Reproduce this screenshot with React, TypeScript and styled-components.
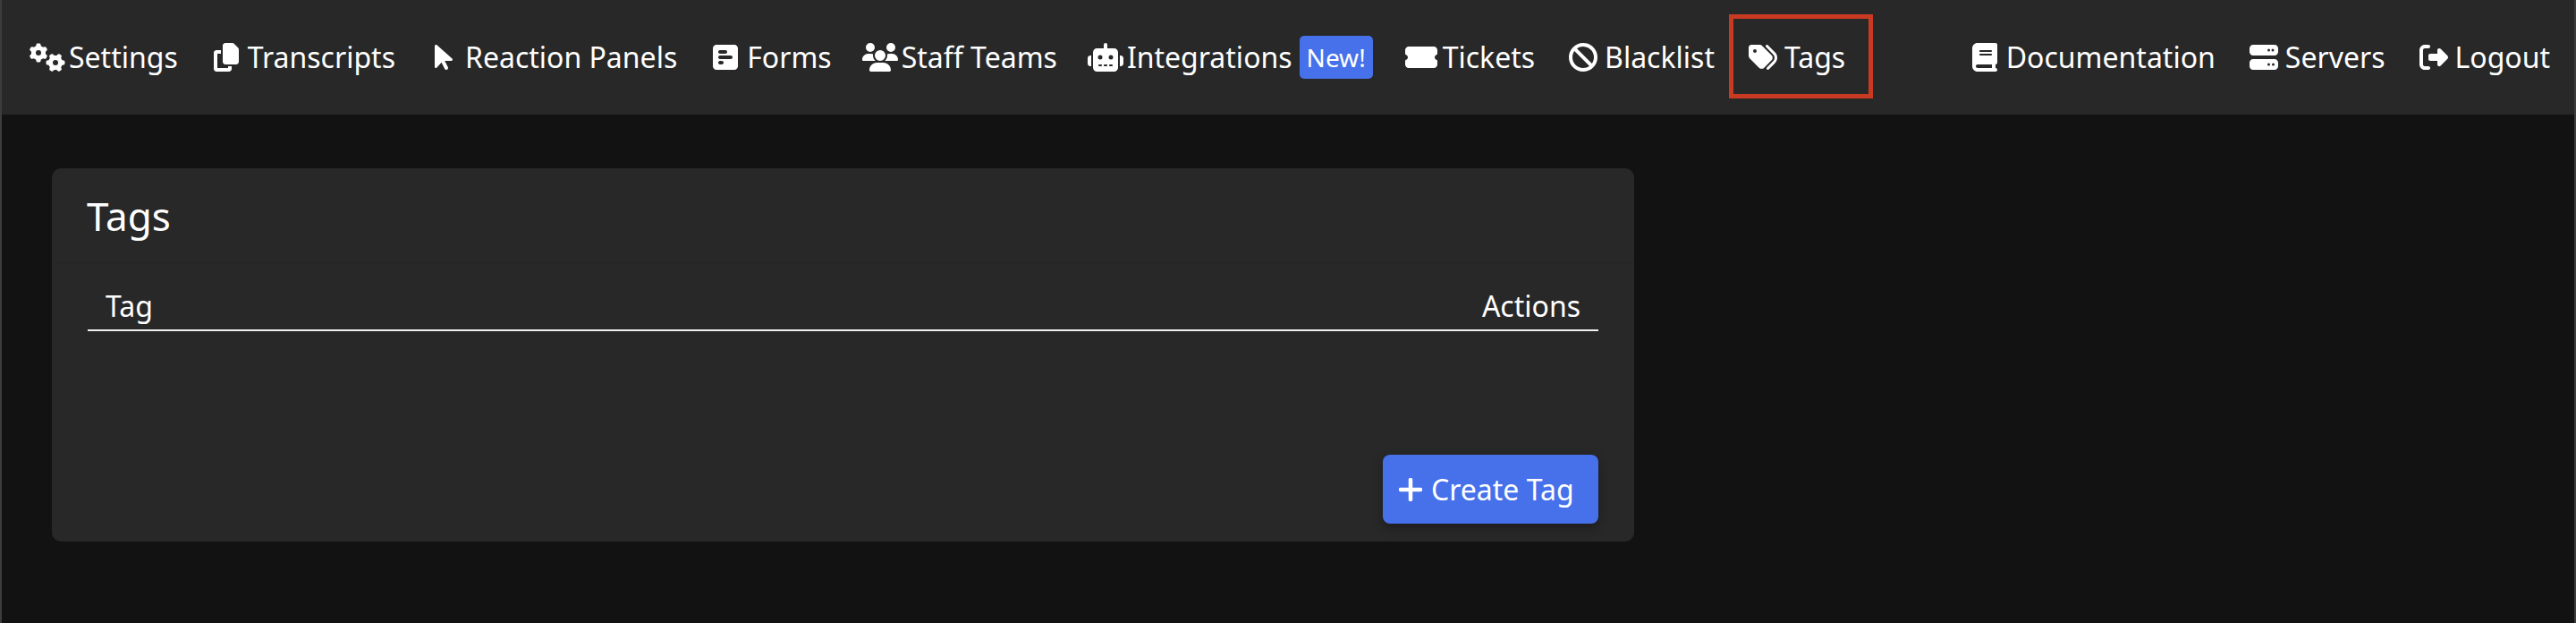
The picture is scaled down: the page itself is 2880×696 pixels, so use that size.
import styled, { createGlobalStyle } from 'styled-components';
import type { ReactNode } from 'react';
import {
  FaArrowPointer,
  FaBan,
  FaBook,
  FaCopy,
  FaGears,
  FaRightFromBracket,
  FaRobot,
  FaServer,
  FaSquarePollHorizontal,
  FaTags,
  FaTicketSimple,
  FaUsers,
} from 'react-icons/fa6';

const GlobalStyle = createGlobalStyle`
  html, body {
    margin: 0;
    padding: 0;
    background: #121212;
  }
  body {
    font-family: "Noto Sans", "Open Sans", sans-serif;
    color: #fff;
  }
`;

const Page = styled.div`
  height: 696px;
  overflow: hidden;
  border-left: 2px solid #3d3d3d;
  border-right: 2px solid #3d3d3d;
  background: #121212;
`;

const Navbar = styled.nav`
  display: flex;
  justify-content: space-between;
  align-items: center;
  height: 128px;
  padding: 0 27px 0 31px;
  background: #282828;
`;

const NavGroup = styled.div`
  display: flex;
  align-items: center;
  gap: 34px;
`;

const NavItem = styled.a<{ $active?: boolean }>`
  position: relative;
  display: flex;
  align-items: center;
  font-size: 32px;
  line-height: 44px;
  color: #fff;

  ${(p) =>
    p.$active &&
    `
    &::after {
      content: '';
      position: absolute;
      left: -18px;
      right: -31px;
      top: -26px;
      bottom: -24px;
      border: 5px solid #c93a22;
    }
  `}
`;

const IconSlot = styled.span`
  display: flex;
  justify-content: center;
  width: 40px;
  margin-right: 4px;

  svg {
    width: 40px;
    height: 32px;
    flex-shrink: 0;
  }
`;

const Badge = styled.span`
  margin-left: 8px;
  padding: 0 8px;
  border-radius: 5px;
  background: #4671ea;
  font-size: 28px;
  line-height: 48px;
`;

const Main = styled.main`
  padding: 60px 56px;
`;

const Card = styled.section`
  width: 1769px;
  border-radius: 10px;
  background: #282828;
`;

const CardHeader = styled.header`
  height: 107px;
  padding: 0 39px;
  border-bottom: 1px solid #262626;
  box-sizing: border-box;
  display: flex;
  align-items: center;
`;

const CardTitle = styled.h1`
  margin: 0;
  font-size: 44px;
  font-weight: 400;
`;

const CardBody = styled.div`
  height: 193px;
  padding: 0 40px;
  box-sizing: border-box;
`;

const Table = styled.table`
  width: 100%;
  border-collapse: collapse;
`;

const HeadCell = styled.th<{ $right?: boolean }>`
  height: 74px;
  padding: 0 20px 5px;
  box-sizing: border-box;
  border-bottom: 2px solid #f0f0f0;
  font-size: 32px;
  font-weight: 400;
  vertical-align: bottom;
  text-align: ${(p) => (p.$right ? 'right' : 'left')};
`;

const CardFooter = styled.footer`
  display: flex;
  justify-content: flex-end;
  padding: 19px 40px 20px;
  border-top: 1px solid #262626;
`;

const Button = styled.button`
  display: flex;
  align-items: center;
  gap: 10px;
  height: 77px;
  width: 241px;
  padding: 0 18px;
  border: none;
  border-radius: 8px;
  background: #4671ea;
  color: #fff;
  font-family: inherit;
  font-size: 32px;
  box-shadow: 0 4px 12px rgba(0, 0, 0, 0.3);
`;

const PlusIcon = () => (
  <svg width="26" height="26" viewBox="0 0 26 26" fill="none" stroke="currentColor" strokeWidth="4.5" strokeLinecap="round">
    <path d="M13 2v22M2 13h22" />
  </svg>
);

type Link = { icon: ReactNode; label: string; badge?: string; active?: boolean };

const leftLinks: Link[] = [
  { icon: <FaGears />, label: 'Settings' },
  { icon: <FaCopy />, label: 'Transcripts' },
  { icon: <FaArrowPointer />, label: 'Reaction Panels' },
  { icon: <FaSquarePollHorizontal />, label: 'Forms' },
  { icon: <FaUsers />, label: 'Staff Teams' },
  { icon: <FaRobot />, label: 'Integrations', badge: 'New!' },
  { icon: <FaTicketSimple />, label: 'Tickets' },
  { icon: <FaBan />, label: 'Blacklist' },
  { icon: <FaTags />, label: 'Tags', active: true },
];

const rightLinks: Link[] = [
  { icon: <FaBook />, label: 'Documentation' },
  { icon: <FaServer />, label: 'Servers' },
  { icon: <FaRightFromBracket />, label: 'Logout' },
];

function renderLinks(links: Link[]) {
  return links.map((link) => (
    <NavItem key={link.label} $active={link.active}>
      <IconSlot>{link.icon}</IconSlot>
      {link.label}
      {link.badge && <Badge>{link.badge}</Badge>}
    </NavItem>
  ));
}

export default function App() {
  return (
    <Page>
      <GlobalStyle />
      <Navbar>
        <NavGroup>{renderLinks(leftLinks)}</NavGroup>
        <NavGroup>{renderLinks(rightLinks)}</NavGroup>
      </Navbar>
      <Main>
        <Card>
          <CardHeader>
            <CardTitle>Tags</CardTitle>
          </CardHeader>
          <CardBody>
            <Table>
              <thead>
                <tr>
                  <HeadCell>Tag</HeadCell>
                  <HeadCell $right>Actions</HeadCell>
                </tr>
              </thead>
            </Table>
          </CardBody>
          <CardFooter>
            <Button>
              <PlusIcon />
              Create Tag
            </Button>
          </CardFooter>
        </Card>
      </Main>
    </Page>
  );
}
